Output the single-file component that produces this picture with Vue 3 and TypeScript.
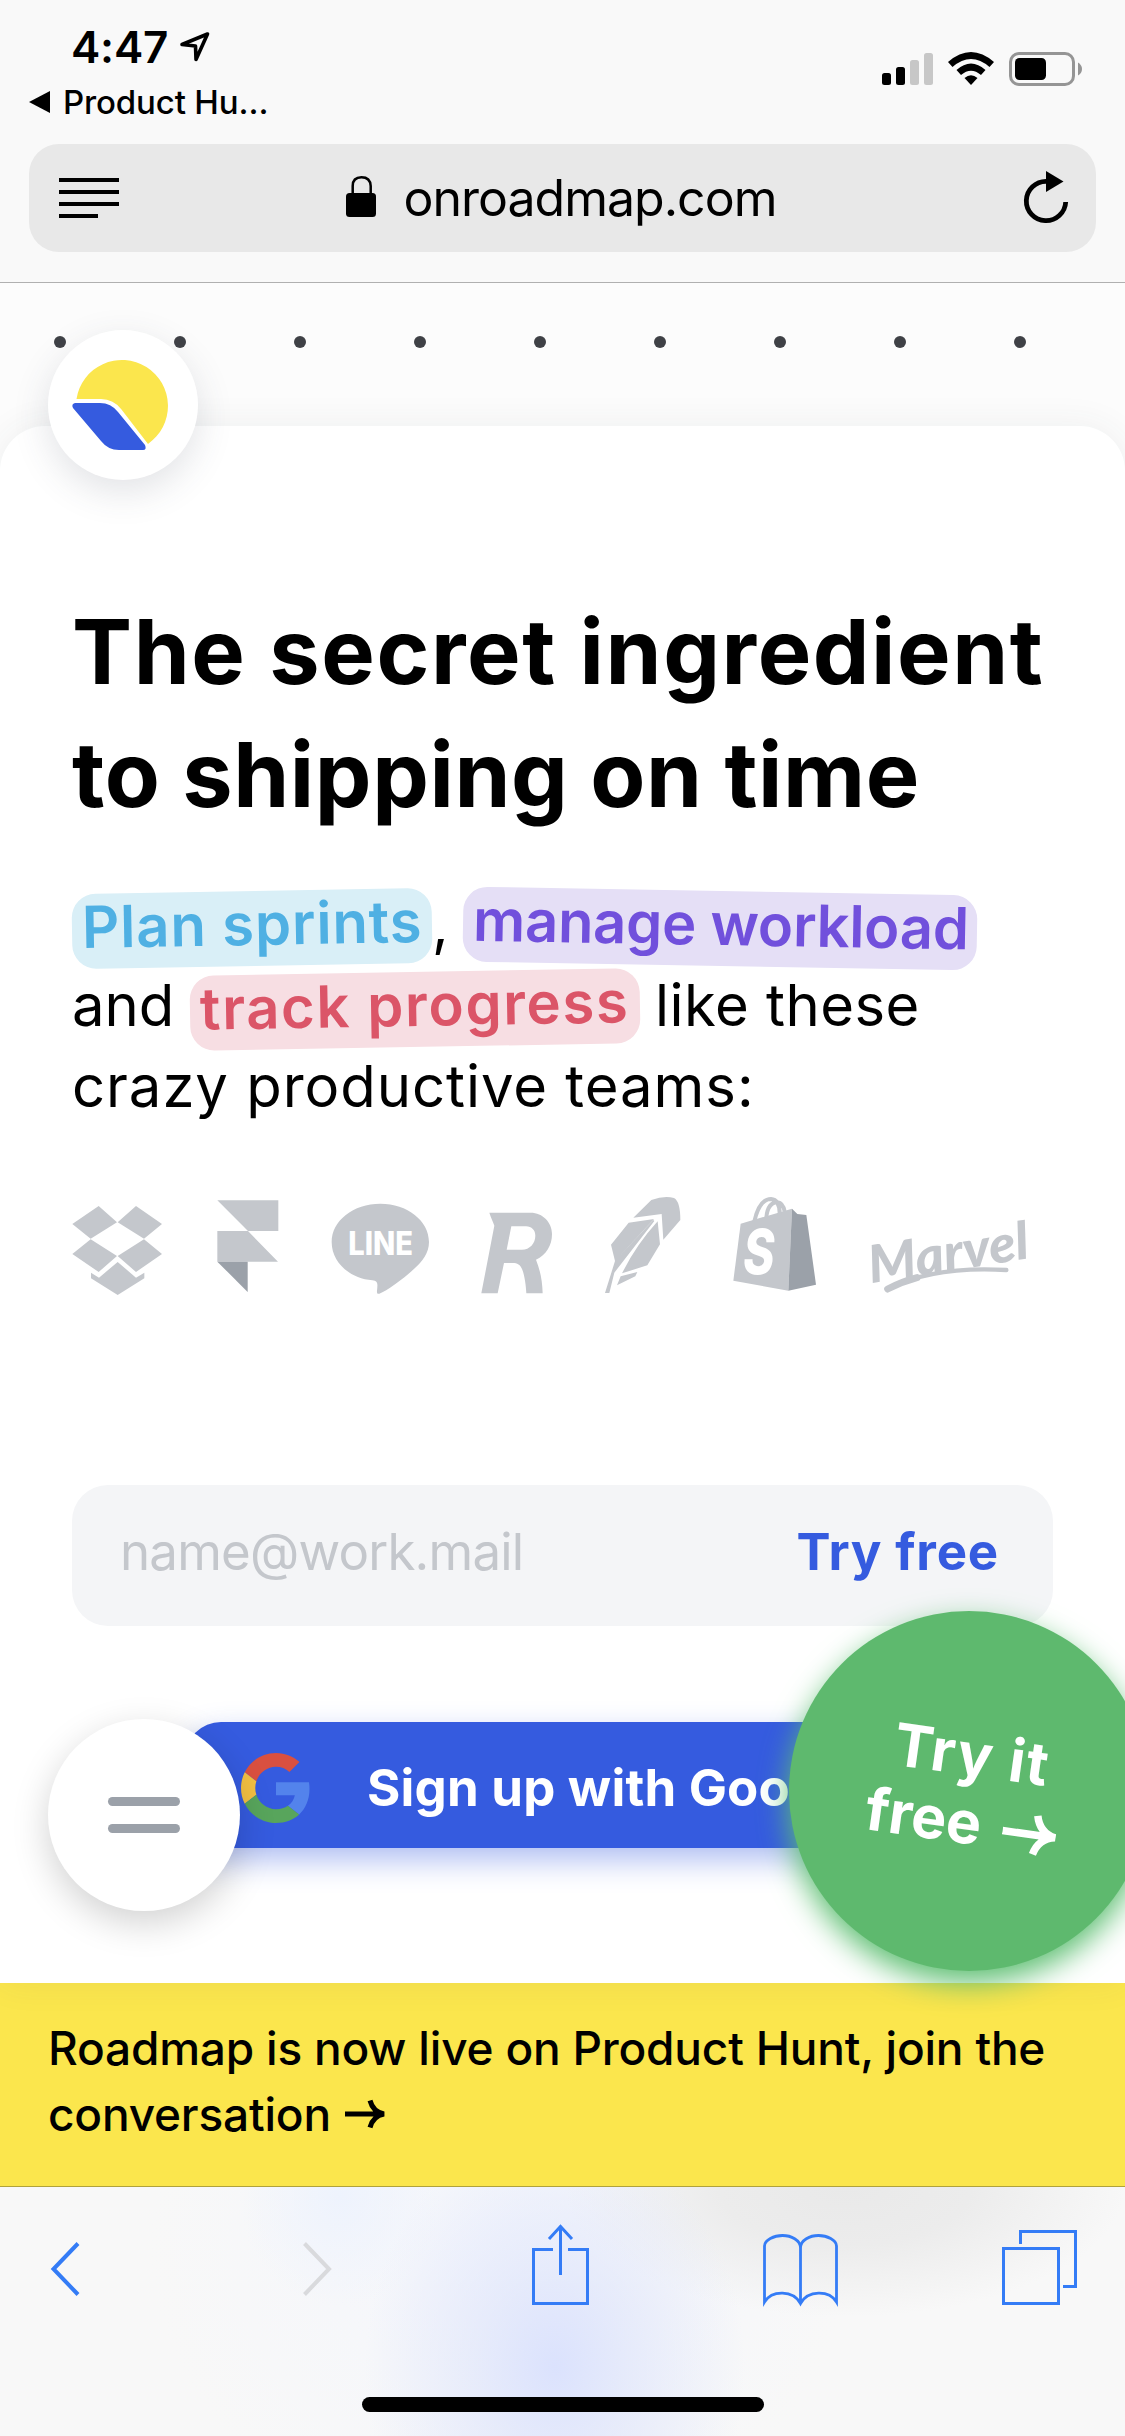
<script setup lang="ts">
const dots: number[] = Array.from({ length: 9 }, (_, i) => i)
</script>

<template>
  <div class="screen">
    <header class="browser">
      <div class="status">
        <div class="status-left">
          <div class="time">
            <span class="clock">4:47</span>
            <svg width="32" height="34" viewBox="179 30 32 34"><path d="M207.500 34L182 44.500L195.500 46L196 59.500Z" fill="none" stroke="#000" stroke-width="3.600" stroke-linejoin="round" /></svg>
          </div>
          <div class="back-app">
            <svg width="21" height="22" viewBox="0 0 21 22"><path d="M0 11L21 0V22Z" /></svg>
            <span>Product Hu…</span>
          </div>
        </div>
        <svg class="status-icons" width="202" height="36" viewBox="881 51 202 36">
          <rect x="882" y="73" width="9" height="12" rx="2.500" />
          <rect x="896" y="67" width="9" height="18" rx="2.500" />
          <rect x="910" y="60" width="9" height="25" rx="2.500" fill="#c7c7c7" />
          <rect x="924" y="53" width="9" height="32" rx="2.500" fill="#c7c7c7" />
          <path d="M948 62Q971 42 994 62L989.500 67Q971 51 952.500 67Z" />
          <path d="M956.500 70Q971 57 985.500 70L981 75Q971 66.500 961 75Z" />
          <path d="M964.500 78Q971 72.500 977.500 78L971 85Z" />
          <rect x="1010.500" y="53.500" width="63" height="31" rx="8.500" fill="none" stroke="#959595" stroke-width="3" />
          <rect x="1015" y="58" width="31" height="22" rx="4.500" />
          <path d="M1078 62.500Q1082 65 1082 69T1078 75.500Z" fill="#959595" />
        </svg>
      </div>
      <div class="url-bar">
        <svg width="60" height="40" viewBox="0 0 60 40"><path d="M0 0H60V4H0ZM0 12H60V16H0ZM0 24H60V28H0ZM0 36H39V40H0Z" /></svg>
        <div class="address">
          <svg width="30" height="42" viewBox="346 175 30 42">
            <rect x="346" y="193" width="30" height="24" rx="3.500" />
            <path d="M352.700 194V186Q352.700 177.200 361.500 177.200T370.700 186V194" fill="none" stroke="#000" stroke-width="2.500" />
          </svg>
          <span>onroadmap.com</span>
        </div>
        <svg width="46" height="54" viewBox="1023 172 46 54">
          <path d="M1046.500 182.300A19.700 19.700 0 1 0 1065.700 203" fill="none" stroke="#000" stroke-width="4.800" />
          <path d="M1046 172L1063.500 182.500L1046 193Z" />
        </svg>
      </div>
    </header>

    <div class="dots"><i v-for="d in dots" :key="d" class="dot"></i></div>

    <main class="card">
      <div class="brand">
        <svg width="150" height="150" viewBox="48 330 150 150">
          <path d="M76.500 399A46 46 0 1 1 148 443.900L121.500 409.500Q113.500 399 101 399Z" fill="#fbe64d" />
          <path d="M75 403H100Q111 403 118 412L145 445Q147 450 143 450H119Q108 450 101 441L73 408Q71 404 75 403Z" fill="#355bdf" />
        </svg>
      </div>

      <h1><span class="h-a">The secret ingredient</span><br /><span class="h-b">to shipping on time</span></h1>

      <div class="lead">
        <div class="line"><span class="pill sky">Plan sprints</span><span class="comma">,</span><span class="pill violet">manage workload</span></div>
        <div class="line"><span class="and">and</span><span class="pill rose">track progress</span><span class="like">like these</span></div>
        <div class="line"><span class="crazy">crazy productive teams:</span></div>
      </div>

      <div class="teams">
        <svg width="118" height="110" viewBox="66 60 354 330">
          <path d="M146 108L201 157L122 206L67 162ZM258 108L336 162L282 206L203 157ZM122 208L201 258L146 306L67 252ZM282 208L336 252L258 306L203 258ZM203 276L258 323L283 308V325L203 375L123 325V308L147 323Z" />
        </svg>
        <svg width="113.330" height="110" viewBox="420 60 340 330">
          <path d="M502 91H685V183H594L684 275H502V183H594Z" /><path d="M502 275H593V366Z" fill="#9ba1a9" />
        </svg>
        <svg width="146.670" height="110" viewBox="760 60 440 330">
          <path d="M992 101C1073 101 1138 152 1138 216C1138 249 1119 274 1092 298C1062 326 1011 363 989 371C978 374 983 361 983 350C984 338 982 333 968 331C900 325 846 277 846 216C846 152 911 101 992 101Z" />
          <text x="896" y="255" class="line-word" textLength="194" lengthAdjust="spacingAndGlyphs">LINE</text>
        </svg>
        <svg width="120" height="110" viewBox="1200 60 360 330">
          <path fill-rule="evenodd" d="M1318 128H1442C1478 128 1506 157 1506 192C1506 226 1489 255 1458 269C1471 302 1477 333 1478 370H1429C1428 347 1424 318 1417 299C1411 284 1402 279 1388 279H1362L1343 370H1294L1333 167C1329 154 1323 144 1318 128ZM1384 169L1370 239H1416C1439 239 1456 220 1456 197C1456 181 1445 169 1428 169Z" />
        </svg>
        <svg width="136.670" height="110" viewBox="0 60 410 330">
          <path d="M190 143L244 90Q283 76 312 84Q331 94 331 150L280 209L275 132Z" />
          <path d="M176 158L252 147L135 273L123 224ZM135 273L250 150L253 153L133 308L118 369H105Z" />
          <path d="M263 154L270 223L232 286L156 310Q199 224 263 154ZM152 319L202 306L196 319L141 346Z" />
        </svg>
        <svg width="140" height="110" viewBox="410 60 420 330">
          <path d="M511 161L665 116L654 362L489 332Z" />
          <path d="M665 116L681 132L708 135L737 344L654 362Z" fill="#9ba1a9" />
          <path d="M552 154Q567 87 602 87Q630 89 628 137M588 143Q592 97 622 97Q638 99 643 125" fill="none" stroke="#c4c7cc" stroke-width="12" />
          <text x="519" y="313" class="bag-s" textLength="94" lengthAdjust="spacingAndGlyphs">S</text>
        </svg>
        <svg width="200" height="110" viewBox="830 60 600 330">
          <text x="0" y="0" transform="translate(902 340) rotate(-9)" class="marvel" textLength="486" lengthAdjust="spacingAndGlyphs">Marvel</text>
          <path d="M952 357Q1090 287 1308 300" fill="none" stroke="#c4c7cc" stroke-width="13" stroke-linecap="round" />
          <path d="M952 357Q995 335 1040 323" fill="none" stroke="#c4c7cc" stroke-width="21" stroke-linecap="round" />
        </svg>
      </div>

      <div class="signup">
        <span class="placeholder">name@work.mail</span>
        <span class="try">Try free</span>
      </div>

      <div class="google">
        <svg width="70" height="70" viewBox="0 0 48 48">
          <path fill="#d95040" d="M24 9.500c3.540 0 6.710 1.220 9.210 3.600l6.850-6.850C35.900 2.380 30.470 0 24 0 14.620 0 6.510 5.380 2.560 13.220l7.980 6.190C12.430 13.720 17.740 9.500 24 9.500z" />
          <path fill="#5383ec" d="M46.980 24.550c0-1.570-.15-3.090-.38-4.550H24v9.020h12.940c-.58 2.960-2.260 5.480-4.780 7.180l7.730 6c4.510-4.180 7.090-10.360 7.090-17.650z" />
          <path fill="#f2bf42" d="M10.530 28.590c-.48-1.450-.76-2.990-.76-4.590s.27-3.140.76-4.590l-7.980-6.190C.92 16.460 0 20.120 0 24s.92 7.540 2.560 10.780l7.970-6.190z" />
          <path fill="#58a55c" d="M24 48c6.480 0 11.930-2.130 15.890-5.810l-7.730-6c-2.150 1.450-4.920 2.300-8.160 2.300-6.260 0-11.570-4.220-13.470-9.910l-7.980 6.190C6.510 42.620 14.620 48 24 48z" />
        </svg>
        <span>Sign up with Google</span>
      </div>

      <div class="menu"><i></i><i></i></div>
      <div class="bubble">
        <div class="bubble-text">
          <div class="b1">Try it</div>
          <div class="b2">
            <span>free</span>
            <svg width="54" height="42" viewBox="0 0 54 42"><path d="M0 21H50M33 1.500Q37 18 53 21Q37 24 33 40.500" fill="none" stroke="#fff" stroke-width="7.500" /></svg>
          </div>
        </div>
      </div>
    </main>

    <div class="banner">
      <div class="n1">Roadmap is now live on Product Hunt, join the</div>
      <div class="n2">
        <span>conversation</span>
        <svg width="40" height="30" viewBox="0 0 40 30"><path d="M0 15H37M25 1.500Q28 13 39 15Q28 17 25 28.500" fill="none" stroke="#000" stroke-width="5" /></svg>
      </div>
    </div>

    <nav class="toolbar">
      <div class="tools">
        <svg width="36" height="90" viewBox="48 2219 36 90"><path d="M78 2243.500L53.500 2269L78 2294.500" stroke-width="4" /></svg>
        <svg class="g1" width="36" height="90" viewBox="300 2219 36 90"><path d="M304.500 2243.500L329 2269L304.500 2294.500" stroke-width="4" stroke="#d9dadd" /></svg>
        <svg class="g2" width="65" height="90" viewBox="528 2219 65 90"><path d="M553 2249.500H533.500V2303.500H587.500V2249.500H568M560.500 2275V2226M549 2239L560.500 2226.500L572 2239" /></svg>
        <svg class="g3" width="81" height="90" viewBox="760 2219 81 90"><path d="M800.500 2303V2248C800.500 2240 791 2235.500 782.500 2235.500S764.500 2240 764.500 2246V2302C772 2290 793 2290 800.500 2303.500C808 2290 829 2290 836.500 2302V2246C836.500 2240 827 2235.500 818.500 2235.500S800.500 2240 800.500 2248" stroke-width="2.800" /></svg>
        <svg class="g4" width="80" height="90" viewBox="1000 2219 80 90"><path d="M1003.500 2248.500H1058.500V2303.500H1003.500ZM1020.500 2244V2231.500H1075.500V2286.500H1063" /></svg>
      </div>
      <div class="home"></div>
    </nav>
  </div>
</template>

<style>
body { margin: 0; }
</style>

<style scoped>
.screen { width: 1125px; height: 2436px; overflow: hidden; background: #fcfcfc; color: #000; font-family: Inter, "Liberation Sans", sans-serif; white-space: nowrap; }
svg { display: block; flex: none; }
.browser { box-sizing: border-box; height: 283px; background: #f9f9f9; border-bottom: 1px solid #b0b0b0; }
.status { display: flex; justify-content: space-between; height: 127px; padding: 17px 42px 0 29px; }
.time { display: flex; height: 60px; line-height: 60px; padding-left: 42px; font-size: 44px; font-weight: 600; gap: 10px; }
.time svg { margin-top: 13px; }
.clock { width: 98px; letter-spacing: -0.200px; }
.back-app { display: flex; align-items: center; gap: 13px; margin-top: 5px; height: 40px; line-height: 40px; font-size: 33px; letter-spacing: -0.150px; font-weight: 500; }
.status-icons { margin-top: 34px; }
.url-bar { display: flex; align-items: center; justify-content: space-between; height: 108px; margin: 0 29px; padding: 0 27px 0 30px; box-sizing: border-box; border-radius: 30px; background: #e8e8e8; }
.address { display: flex; align-items: center; gap: 28px; font-size: 50px; letter-spacing: -1px; margin-right: 20px; }
.address svg { margin-top: -4px; }

.dots { display: flex; gap: 108px; height: 143px; padding: 53px 0 0 54px; box-sizing: border-box; background: #fcfcfc; }
.dot { flex: none; width: 12px; height: 12px; border-radius: 50%; background: #3f4146; }

.card { position: relative; height: 1557px; padding: 164px 72px 0; box-sizing: border-box; background: #fff; border-radius: 45px 45px 0 0; box-shadow: 0 0 36px rgba(60, 65, 75, 0.070); }
.brand { position: absolute; left: 48px; top: -96px; width: 150px; height: 150px; border-radius: 50%; background: #fff; box-shadow: 0 12px 36px rgba(60, 70, 90, 0.150); }
h1 { margin: 0; font-size: 90px; line-height: 123px; font-weight: 700; }
.h-a { letter-spacing: 1.570px; }
.h-b { letter-spacing: 0.570px; }
.lead { margin-top: 48px; font-size: 58px; }
.line { display: flex; height: 81px; line-height: 81px; }
.pill { box-sizing: border-box; height: 75px; margin-top: 7px; line-height: 67px; border-radius: 24px; padding-left: 10px; font-weight: 600; flex: none; }
.sky { width: 360px; background: #d9eff7; color: #4fb0e3; transform: rotate(-1deg); letter-spacing: 0.850px; }
.comma { width: 31px; }
.violet { width: 514px; background: #e5dff6; color: #7150dc; transform: rotate(1deg); letter-spacing: -0.300px; }
.and { width: 118px; }
.rose { width: 450px; background: #f7dee3; color: #db5568; transform: rotate(-1deg); letter-spacing: 1.600px; }
.like { margin-left: 15px; letter-spacing: 0.450px; }
.crazy { letter-spacing: 0.950px; }

.teams { display: flex; margin-top: 63px; height: 110px; fill: #c4c7cc; }
.line-word { font: 800 96px Inter, sans-serif; fill: #fff; }
.bag-s { font: italic 800 186px Inter, sans-serif; fill: #fff; }
.marvel { font: italic 900 156px Lato, sans-serif; }

.signup { display: flex; justify-content: space-between; height: 141px; line-height: 133px; margin-top: 185px; padding: 0 54px 0 48px; border-radius: 36px; background: #f4f5f7; font-size: 51px; }
.placeholder { color: #c4c7cc; letter-spacing: -0.800px; }
.try { color: #355bdf; font-weight: 700; letter-spacing: 0.800px; }
.google { box-sizing: border-box; display: flex; align-items: center; height: 126px; margin: 96px 0 0 113px; padding: 5px 0 0 56px; gap: 56px; border-radius: 36px; background: #355bdf; color: #fff; font-size: 51px; font-weight: 700; letter-spacing: 0.200px; box-shadow: 0 12px 30px rgba(53, 91, 223, 0.400); }

.menu { position: absolute; left: 48px; top: 1293px; width: 192px; height: 192px; border-radius: 50%; background: #fff; display: flex; flex-direction: column; align-items: center; justify-content: center; gap: 18px; box-shadow: 0 12px 36px rgba(0, 0, 0, 0.180); }
.menu i { width: 72px; height: 9px; border-radius: 4.500px; background: #9ba1a9; }
.bubble { position: absolute; z-index: 2; left: 789px; top: 1185px; width: 360px; height: 360px; border-radius: 50%; background: #5eb96e; color: #fff; box-shadow: 0 12px 30px #5ebf72; }
.bubble-text { width: 192px; margin: 110px 0 0 81px; transform: rotate(8deg); font-size: 59px; line-height: 66px; font-weight: 700; }
.b1 { padding-left: 19px; letter-spacing: 1.400px; }
.b2 { display: flex; align-items: center; justify-content: space-between; margin-top: 2px; }
.b2 svg { margin-top: 6px; }

.banner { box-sizing: border-box; height: 204px; padding: 32px 48px 0; background: #fbe64d; border-bottom: 1px solid #b0a23a; font-size: 46px; line-height: 66px; font-weight: 500; letter-spacing: -0.200px; }
.n2 { display: flex; align-items: center; gap: 14px; }

.toolbar { box-sizing: border-box; height: 249px; padding-top: 32px; background:
  radial-gradient(ellipse 190px 240px at 555px 180px, #dbe2fd 0%, rgba(224, 230, 251, 0.700) 40%, rgba(240, 244, 252, 0) 100%),
  radial-gradient(ellipse 280px 130px at 845px 0, #e9e9e9 0%, #ececec 45%, rgba(246, 246, 247, 0) 100%),
  radial-gradient(ellipse 100px 110px at 340px 10px, #eef3fd 0%, rgba(244, 247, 253, 0) 100%),
  radial-gradient(ellipse 350px 300px at 500px 60px, #f4f6fc 0%, rgba(248, 248, 248, 0) 100%), #f8f8f8; }
.tools { display: flex; padding-left: 48px; }
.tools svg { fill: none; stroke: #347cf6; stroke-width: 3; }
.g1 { margin-left: 216px; }
.g2 { margin-left: 192px; }
.g3 { margin-left: 167px; }
.g4 { margin-left: 159px; }
.home { width: 402px; height: 15px; margin: 88px 0 0 362px; border-radius: 8px; background: #000; }
</style>
